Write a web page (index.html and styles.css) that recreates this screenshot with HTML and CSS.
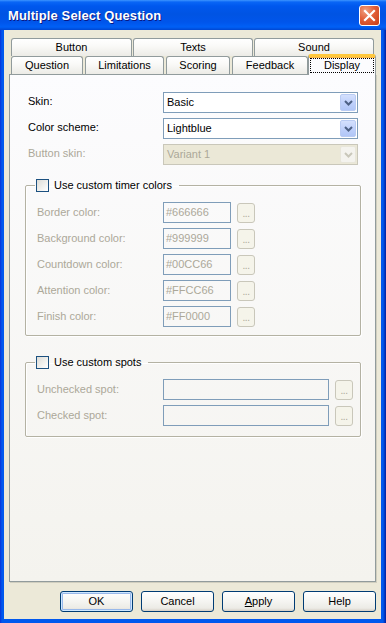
FILE: index.html
```html
<!DOCTYPE html>
<html>
<head>
<meta charset="utf-8">
<link rel="stylesheet" href="styles.css">
</head>
<body>
<div class="window">
  <div class="titlebar">
    <span class="title">Multiple Select Question</span>
    <span class="close">
      <svg width="13" height="13" viewBox="0 0 13 13"><path d="M2 2 L11 11 M11 2 L2 11" stroke="#fff" stroke-width="2.2" stroke-linecap="square"/></svg>
    </span>
  </div>
  <div class="client">
    <div class="tabs">
      <div class="tabrow">
        <div class="tab t-button">Button</div>
        <div class="tab t-texts">Texts</div>
        <div class="tab t-sound">Sound</div>
      </div>
      <div class="tabrow front">
        <div class="tab t-question">Question</div>
        <div class="tab t-limits">Limitations</div>
        <div class="tab t-scoring">Scoring</div>
        <div class="tab t-feedback">Feedback</div>
        <div class="tab t-display selected"><span class="focus">Display</span></div>
      </div>
    </div>
    <div class="panel">
      <div class="fields">
        <label class="lbl">Skin:</label>
        <div class="combo"><span class="combo-text">Basic</span><span class="drop"><svg width="9" height="6" viewBox="0 0 9 6"><path d="M1 1 L4.5 4.5 L8 1" fill="none" stroke="#4D6185" stroke-width="2"/></svg></span></div>
        <label class="lbl">Color scheme:</label>
        <div class="combo"><span class="combo-text">Lightblue</span><span class="drop"><svg width="9" height="6" viewBox="0 0 9 6"><path d="M1 1 L4.5 4.5 L8 1" fill="none" stroke="#4D6185" stroke-width="2"/></svg></span></div>
        <label class="lbl disabled">Button skin:</label>
        <div class="combo off"><span class="combo-text">Variant 1</span><span class="drop"><svg width="9" height="6" viewBox="0 0 9 6"><path d="M1 1 L4.5 4.5 L8 1" fill="none" stroke="#C9C7BA" stroke-width="2"/></svg></span></div>
      </div>

      <fieldset class="group timer">
        <legend class="legend"><span class="check"></span><span>Use custom timer colors</span></legend>
        <div class="rows short">
          <span class="rl">Border color:</span><span class="tb">#666666</span><span class="dots">...</span>
          <span class="rl">Background color:</span><span class="tb">#999999</span><span class="dots">...</span>
          <span class="rl">Countdown color:</span><span class="tb">#00CC66</span><span class="dots">...</span>
          <span class="rl">Attention color:</span><span class="tb">#FFCC66</span><span class="dots">...</span>
          <span class="rl">Finish color:</span><span class="tb">#FF0000</span><span class="dots">...</span>
        </div>
      </fieldset>

      <fieldset class="group spots">
        <legend class="legend"><span class="check"></span><span>Use custom spots</span></legend>
        <div class="rows long">
          <span class="rl">Unchecked spot:</span><span class="tb"></span><span class="dots">...</span>
          <span class="rl">Checked spot:</span><span class="tb"></span><span class="dots">...</span>
        </div>
      </fieldset>
    </div>
    <div class="buttons">
      <span class="btn default">OK</span>
      <span class="btn">Cancel</span>
      <span class="btn"><u>A</u>pply</span>
      <span class="btn">Help</span>
    </div>
  </div>
</div>
</body>
</html>
```

FILE: styles.css
```css
* { box-sizing: border-box; }
html, body { margin: 0; padding: 0; }
body {
  font-family: "Liberation Sans", Arial, sans-serif;
  font-size: 11px;
  color: #000;
  background: #0055E5;
}
.window {
  width: 386px;
  height: 623px;
  display: flex;
  flex-direction: column;
  background: linear-gradient(to right, #0831D9 0, #0058EE 2px, #0058EE 383px, #001EA0 386px);
}
.titlebar {
  height: 30px;
  flex: none;
  display: flex;
  align-items: center;
  justify-content: space-between;
  padding: 0 6px 0 8px;
  background: linear-gradient(to bottom, #3D95FF 0, #0A66F6 2px, #0058EE 6px, #0054E3 14px, #0055EB 22px, #0060F6 27px, #0047D2 30px);
}
.title {
  color: #fff;
  font-weight: bold;
  font-size: 13px;
  letter-spacing: 0.1px;
  text-shadow: 1px 1px 0 #0A1883;
  margin-top: 1px;
}
.close {
  width: 21px;
  height: 21px;
  border: 1px solid #fff;
  border-radius: 3px;
  background: radial-gradient(circle at 30% 25%, #F0A080 0, #E2603A 45%, #C83C14 100%);
  display: flex;
  align-items: center;
  justify-content: center;
  margin-top: 1px;
}
.client {
  flex: 1;
  margin: 0 5px 4px 4px;
  background: #ECE9D8;
  display: flex;
  flex-direction: column;
  padding: 0 5px 7px 5px;
}
.tabs {
  margin-top: 8px;
  padding-left: 2px;
  flex: none;
}
.tabrow {
  display: flex;
  height: 18px;
}
.tabrow:first-child { gap: 1px; }
.tabrow.front { gap: 2px; position: relative; z-index: 2; }
.tab {
  height: 18px;
  border: 1px solid #919B9C;
  border-bottom: none;
  border-radius: 3px 3px 0 0;
  background: linear-gradient(to bottom, #FFFFFF 0, #FAFAF8 40%, #ECEBE6 100%);
  display: flex;
  align-items: center;
  justify-content: center;
  padding-bottom: 1px;
}
.t-button { width: 121px; }
.t-texts { width: 120px; }
.t-sound { width: 120px; }
.t-question { width: 72px; }
.t-limits { width: 79px; }
.t-scoring { width: 64px; }
.t-feedback { width: 76px; }
.t-display { width: 64px; }
.tab.selected {
  width: 68px;
  height: 21px;
  margin: -2px -2px 0 -2px;
  border-top: 3px solid #FFC83C;
  box-shadow: inset 0 1px 0 #F7B64A;
  background: #FCFCFE;
  align-items: flex-start;
  padding-top: 1px;
  border-radius: 3px 3px 0 0;
}
.focus {
  display: block;
  width: 64px;
  height: 15px;
  border: 1px dotted #000;
  text-align: center;
  line-height: 12px;
}
.panel {
  flex: 1;
  border: 1px solid #919B9C;
  background: linear-gradient(to bottom, #FCFCFE 0, #F4F3EE 100%);
  display: flex;
  flex-direction: column;
  box-shadow: 1px 1px 0 #D0CEBF;
}
.fields {
  display: grid;
  grid-template-columns: 135px 195px;
  grid-auto-rows: 21px;
  row-gap: 5px;
  margin: 17px 0 0 18px;
  align-items: center;
}
.lbl { padding-bottom: 3px; }
.disabled, .rl { color: #ACA899; }
.combo {
  height: 21px;
  border: 1px solid #7F9DB9;
  background: #fff;
  display: flex;
  align-items: center;
  justify-content: space-between;
  padding: 0 1px 0 3px;
}
.combo-text { padding-bottom: 1px; }
.drop {
  width: 16px;
  height: 17px;
  border: 1px solid #B9CBF3;
  border-radius: 2px;
  background: linear-gradient(to bottom, #D4E0FD 0, #C0D1FB 50%, #B1C6F7 100%);
  display: flex;
  align-items: center;
  justify-content: center;
}
.combo.off {
  border-color: #C9C7BA;
  background: #EBE8D7;
  color: #ACA899;
}
.combo.off .drop {
  border-color: #E8E6DA;
  background: #F4F3EE;
}
.group {
  margin: 14px 14px 0 15px;
  width: 336px;
  min-width: 0;
  padding: 0;
  border: 1px solid #B4B2A3;
  box-shadow: inset 1px 1px 0 #fff, 1px 1px 0 #fff;
  border-radius: 2px;
}
.group.spots { margin-top: 20px; }
.legend {
  margin-left: 9px;
  padding: 0 7px 0 1px;
  display: flex;
  align-items: center;
  gap: 5px;
  height: 13px;
  line-height: 13px;
}
.check {
  width: 13px;
  height: 13px;
  border: 1px solid #1C5180;
  background: linear-gradient(135deg, #DCDCD7 0, #F2F2EF 60%, #FFFFFF 100%);
}
.rows {
  display: grid;
  grid-auto-rows: 21px;
  row-gap: 5px;
  align-items: center;
  padding: 10px 0 8px 11px;
}
.rows.short { grid-template-columns: 126px 68px 24px; }
.rows.long { grid-template-columns: 126px 166px 24px; padding-bottom: 10px; }
.rl { padding-bottom: 1px; }
.tb {
  height: 21px;
  border: 1px solid #7F9DB9;
  color: #ACA899;
  padding: 3px 0 0 2px;
  line-height: 13px;
}
.dots {
  margin-left: 6px;
  width: 18px;
  height: 20px;
  border: 1px solid #C9C7BA;
  border-radius: 3px;
  background: #F5F4EA;
  color: #ACA899;
  font-size: 10px;
  text-align: center;
  line-height: 20px;
  letter-spacing: -0.5px;
}
.buttons {
  flex: none;
  display: flex;
  justify-content: flex-end;
  gap: 8px;
  margin-top: 9px;
}
.btn {
  width: 73px;
  height: 21px;
  border: 1px solid #003C74;
  border-radius: 3px;
  background: linear-gradient(to bottom, #FFFFFF 0, #F7F7F4 40%, #ECEBE6 85%, #D6D0C5 100%);
  display: flex;
  align-items: center;
  justify-content: center;
  padding-bottom: 1px;
}
.btn.default {
  box-shadow: inset 0 0 0 1px #CEE7FF, inset 0 0 0 2px #98B8EA;
}
```
